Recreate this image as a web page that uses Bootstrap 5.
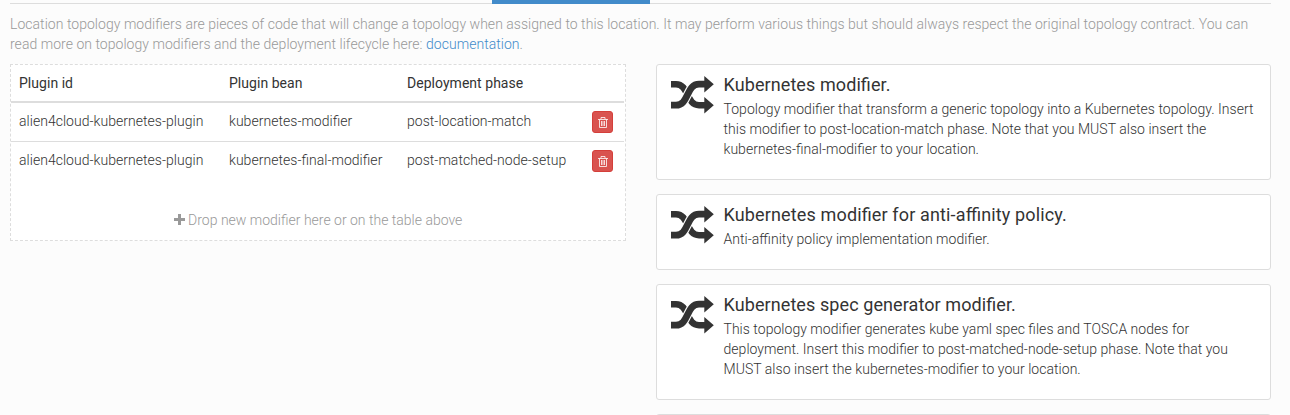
<!DOCTYPE html>
<html lang="en">
<head>
<meta charset="utf-8">
<title>Topology modifiers</title>
<link href="https://cdn.jsdelivr.net/npm/bootstrap@5.3.0/dist/css/bootstrap.min.css" rel="stylesheet">
<style>
body{font:300 14px/20px Roboto,"Liberation Sans",sans-serif;letter-spacing:.033px;font-feature-settings:"liga" 1;color:#333;background:#fcfcfc;overflow:hidden}
.page{padding:0 19px 0 10px;height:415px;overflow:hidden}
.tabline{height:4px;border-bottom:1px solid #ddd}
.tab-on{width:158px;height:4px;margin-left:482px;background:#428bca}
.intro{color:#999;margin:10px 0;letter-spacing:.037px}
.intro a{color:#428bca;text-decoration:none}
.cols{display:grid;grid-template-columns:616px 615px;column-gap:30px;align-items:start}
.drop{border:1px dashed #ddd;background:#fff;height:177px}
.mods{width:613px;table-layout:fixed;margin:0;--bs-table-bg:transparent;--bs-table-color:#333;border-color:#ddd}
.mods th{font-weight:450;padding:8px;border-bottom:2px solid #ddd;line-height:20px;height:37px;color:#333}
.mods td{padding:8px 8px 0;height:39px;line-height:20px;border:0;vertical-align:top}
.mods tbody tr+tr td{border-top:1px solid #ddd}
.del{width:21px;height:22px;padding:0;border:1px solid #d43f3a;border-radius:3px;background:#d9534f;display:flex;align-items:center;justify-content:center}
.del svg{margin-top:1px}
.hint{color:#999;margin-top:30px;letter-spacing:0}
.hint svg{vertical-align:-1px;margin-bottom:1px}
.mod{border:1px solid #ddd;border-radius:3px;background:#fff;margin-bottom:14px;padding:9px 14px;height:116px}
.mod.short{height:76px}
.mod h4{font-size:18px;font-weight:400;line-height:20px;margin:1px 0 4px;color:#333;letter-spacing:.09px}
.mod.short h4{letter-spacing:.145px}
.mod p{margin:0;width:535px}
.shuf{width:43px;height:38px;margin:2px 9.500px 0 0;flex:none}
</style>
</head>
<body>
<svg class="d-none">
<symbol id="shuffle" viewBox="0 0 43 38"><path d="M0 8.200H5C18 8.200 15 29.200 28 29.200H34" fill="none" stroke="#333" stroke-width="6.600"/><path d="M5 29.200C18 29.200 15 8.200 28 8.200" fill="none" stroke="#fff" stroke-width="9"/><path d="M0 29.200H5C18 29.200 15 8.200 28 8.200H34" fill="none" stroke="#333" stroke-width="6.800"/><path d="M33.300 0L42.800 8.200L33.300 16.500zM33.300 21L42.800 29.200L33.300 37.500z" fill="#333"/></symbol>
<symbol id="trash" viewBox="0 0 10 11"><path d="M0 2.500H10M3 2V.5H7V2M1.500 2.500V10.500H8.500V2.500M3.500 4V9M5 4V9M6.500 4V9" fill="none" stroke="#fff" stroke-width=".8"/></symbol>
</svg>
<main class="page">
<div class="tabline"><div class="tab-on"></div></div>
<p class="intro">Location topology modifiers are pieces of code that will change a topology when assigned to this location. It may perform various things but should always respect the original topology contract. You can read more on topology modifiers and the deployment lifecycle here: <a href="#">documentation</a>.</p>
<div class="cols">
<section class="drop">
<table class="table mods">
<colgroup><col style="width:210px"><col style="width:178px"><col style="width:185px"><col></colgroup>
<thead><tr><th>Plugin id</th><th>Plugin bean</th><th>Deployment phase</th><th></th></tr></thead>
<tbody>
<tr><td>alien4cloud-kubernetes-plugin</td><td>kubernetes-modifier</td><td>post-location-match</td><td><button class="btn del" aria-label="Delete"><svg width="10" height="11"><use href="#trash"/></svg></button></td></tr>
<tr><td>alien4cloud-kubernetes-plugin</td><td>kubernetes-final-modifier</td><td>post-matched-node-setup</td><td><button class="btn del" aria-label="Delete"><svg width="10" height="11"><use href="#trash"/></svg></button></td></tr>
</tbody>
</table>
<div class="hint text-center"><svg width="11" height="11" viewBox="0 0 11 11"><path d="M4 0H7V4H11V7H7V11H4V7H0V4H4z" fill="#999"/></svg> Drop new modifier here or on the table above</div>
</section>
<section>
<article class="mod d-flex"><svg class="shuf"><use href="#shuffle"/></svg><div><h4>Kubernetes modifier.</h4><p>Topology modifier that transform a generic topology into a Kubernetes topology. Insert this modifier to post-location-match phase. Note that you MUST also insert the kubernetes-final-modifier to your location.</p></div></article>
<article class="mod short d-flex"><svg class="shuf"><use href="#shuffle"/></svg><div><h4>Kubernetes modifier for anti-affinity policy.</h4><p>Anti-affinity policy implementation modifier.</p></div></article>
<article class="mod d-flex"><svg class="shuf"><use href="#shuffle"/></svg><div><h4>Kubernetes spec generator modifier.</h4><p>This topology modifier generates kube yaml spec files and TOSCA nodes for deployment. Insert this modifier to post-matched-node-setup phase. Note that you MUST also insert the kubernetes-modifier to your location.</p></div></article>
<article class="mod"></article>
</section>
</div>
</main>
<script src="https://cdn.jsdelivr.net/npm/bootstrap@5.3.0/dist/js/bootstrap.bundle.min.js"></script>
</body>
</html>
